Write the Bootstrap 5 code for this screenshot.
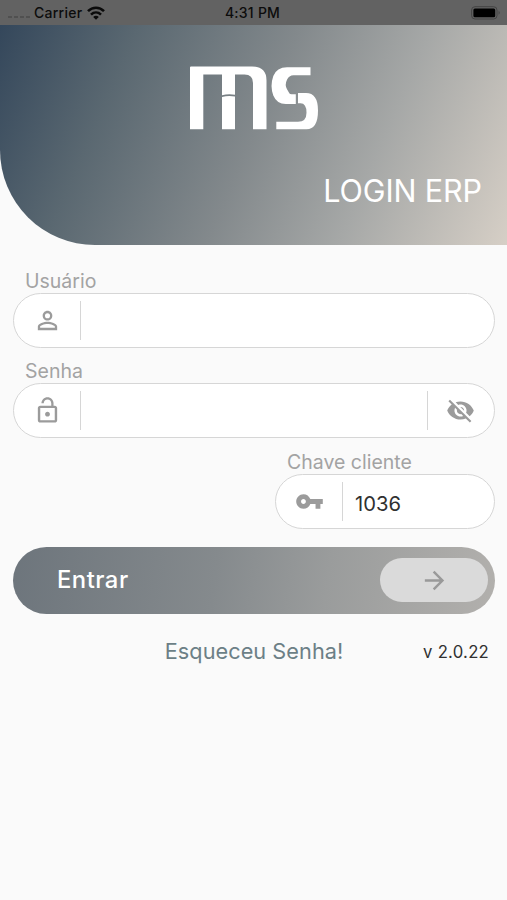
<!DOCTYPE html>
<html lang="pt-BR">
<head>
<meta charset="utf-8">
<meta name="viewport" content="width=device-width, initial-scale=1">
<title>Login ERP</title>
<link rel="stylesheet" href="https://cdn.jsdelivr.net/npm/bootstrap@5.3.0/dist/css/bootstrap.min.css">
<style>
body{font-family:Inter,"Liberation Sans",sans-serif;background:#fafafa;color:#303030;line-height:1}
svg{display:block;flex:none}
.screen{height:900px}
.status-bar{height:25px;background:#626262;color:#0c0c0c;font-size:14px;letter-spacing:.25px;font-weight:500;padding:1px 6px 0 8px}
.status-bar>div{flex:1 1 0}
.signal{width:22px;height:2px;margin-top:8px;margin-right:4px;background:repeating-linear-gradient(90deg,#505050 0 4px,transparent 4px 6px)}
.wifi{margin-left:5px}
.hero{height:220px;background:linear-gradient(113.5deg,#34475b 0,#5a6871 23%,#83898c 50%,#a6a8a7 72%,#d6cfc6 100%);border-bottom-left-radius:95px;padding:40px 25px 0 0}
.hero h1{font-size:30.5px;font-weight:400;color:#fff;margin-top:42px;letter-spacing:-.1px}
.hero svg{margin-left:189px}
.login-form{padding:25px 12px 0 13px}
.caption{font-size:19.5px;line-height:22px;color:#a3a3a3;padding-left:12px;margin-bottom:1px}
.pill{height:55px;border:1.5px solid #d6d6d6;border-radius:28px;background:#fff;color:#9b9b9b}
.pill .glyph{flex:none;width:67px;height:39px;display:flex;align-items:center;justify-content:center}
.pill .lead-glyph{border-right:1.5px solid #d6d6d6}
.pill .trail-glyph{border-left:1.5px solid #d6d6d6;padding-right:1px}
.pill input{min-width:0;border:0;outline:0;background:none;color:#303030;font-size:20.2px;padding:5px 12px 0;width:0}
.field{margin-bottom:12.4px}
.client-key{width:220px}
.enter-btn{height:67px;border:0;border-radius:34px;background:linear-gradient(98deg,#6d757c 0,#858a8d 42%,#9a9c9c 65%,#b2b0ad 100%);color:#fff;font-size:23.8px;letter-spacing:.5px;font-weight:500;padding:0 7px 0 44px;margin-top:18px}
.knob{width:108px;height:44px;border-radius:22px;background:#dadada;color:#999}
.footer-row{display:grid;grid-template-columns:1fr auto 1fr;margin-top:26px}
.forgot{grid-column:2;font-size:21.7px;letter-spacing:.05px;color:#6c7f86;padding-top:1px}
.version{font-size:16.7px;letter-spacing:.25px;padding-right:6px;padding-top:3px}
</style>
</head>
<body>
<main class="screen d-flex flex-column overflow-hidden">
  <div class="status-bar d-flex align-items-center">
    <div class="d-flex align-items-center">
      <span class="signal"></span><span>Carrier</span>
      <svg class="wifi" width="18" height="14" viewBox="0 0 18 14" fill="none" stroke="#0a0a0a" stroke-width="2.6"><path d="M1 5.2C5.500.6 12.500.6 17 5.200"/><path d="M4 8.600c2.900-2.800 7.100-2.800 10 0"/><path d="M9 13.700 6.200 10.900c1.600-1.400 4-1.400 5.600 0z" fill="#0a0a0a" stroke="none"/></svg>
    </div>
    <span class="me-1">4:31 PM</span>
    <div class="d-flex justify-content-end">
      <svg width="30" height="14" viewBox="0 0 30 14"><rect x=".6" y=".7" width="25.4" height="12.3" rx="3.4" fill="none" stroke="#444"/><rect x="2.4" y="2.4" width="21.8" height="8.9" rx="1.5"/><path d="M27.6 4.8q2.200 2 0 4z" fill="#444"/></svg>
    </div>
  </div>
  <header class="hero">
    <svg width="130" height="66" viewBox="0 0 130 66" fill="#fff"><path d="M2 1.500h61q14.500 0 14.500 14v48.700H64V18q0-8.500-8.500-8.500H46v20.300q-6.500-1.200-13 .4V9.500H14.300v54.700H1V2.500q0-1 1-1z"/><path d="M33 32q6.500-1.700 13-.4v32.600H33z"/><path d="M98 2.200h23.500v8.100H104.500q-4.500 0-6.500 4.500-2.500 5 0 9.500l2.500 4.200q.5.800 2 .8h4.300v9.600h-10q-9 0-12.500-8.500-3.500-9.500 0-19.500 3.500-8.700 13.700-8.700z"/><path d="M109 28h8q12 0 12 17.500 0 18.700-11.500 18.700H87.300v-7.500h21.700q8.500 0 8.500-9 0-9.500-6-9.500H109z"/></svg>
    <h1 class="text-end mb-0">LOGIN ERP</h1>
  </header>
  <form class="login-form">
    <div class="field">
      <label class="caption d-block" for="user">Usuário</label>
      <div class="pill d-flex align-items-center">
        <span class="glyph lead-glyph"><svg width="29" height="29" viewBox="0 0 24 24" fill="currentColor"><path d="M12 5.900a2.100 2.100 0 1 1 0 4.200 2.100 2.100 0 0 1 0-4.200m0 9c2.970 0 6.100 1.460 6.100 2.100v1.100H5.900V17c0-.64 3.130-2.100 6.100-2.100M12 4C9.790 4 8 5.790 8 8s1.790 4 4 4 4-1.790 4-4-1.790-4-4-4zm0 9c-2.670 0-8 1.340-8 4v3h16v-3c0-2.660-5.330-4-8-4z"/></svg></span>
        <input class="flex-grow-1" id="user" type="text">
      </div>
    </div>
    <div class="field">
      <label class="caption d-block" for="pass">Senha</label>
      <div class="pill d-flex align-items-center">
        <span class="glyph lead-glyph"><svg width="29" height="29" viewBox="0 0 24 24" fill="currentColor"><path d="M12 17c1.100 0 2-.9 2-2s-.9-2-2-2-2 .9-2 2 .9 2 2 2zm6-9h-1V6c0-2.760-2.240-5-5-5S7 3.240 7 6h1.900c0-1.710 1.390-3.100 3.100-3.100s3.100 1.390 3.100 3.100v2H6c-1.100 0-2 .9-2 2v10c0 1.100.9 2 2 2h12c1.100 0 2-.9 2-2V10c0-1.100-.9-2-2-2zm0 12H6V10h12v10z"/></svg></span>
        <input class="flex-grow-1" id="pass" type="password">
        <span class="glyph trail-glyph"><svg width="29" height="29" viewBox="0 0 24 24" fill="currentColor"><path d="M12 7c2.760 0 5 2.240 5 5 0 .65-.13 1.260-.36 1.830l2.920 2.920c1.510-1.260 2.700-2.890 3.430-4.750-1.730-4.390-6-7.500-11-7.500-1.400 0-2.740.25-3.980.7l2.160 2.160C10.740 7.130 11.350 7 12 7zM2 4.270l2.280 2.280.46.46C3.080 8.300 1.780 10.020 1 12c1.730 4.390 6 7.500 11 7.500 1.550 0 3.030-.3 4.380-.84l.42.42L19.730 22 21 20.730 3.270 3 2 4.270zM7.530 9.800l1.550 1.550c-.05.21-.08.43-.08.65 0 1.660 1.340 3 3 3 .22 0 .44-.03.65-.08l1.550 1.550c-.67.33-1.410.53-2.200.53-2.760 0-5-2.240-5-5 0-.79.2-1.530.53-2.200zm4.310-.78l3.150 3.150.02-.16c0-1.660-1.340-3-3-3l-.17.01z"/></svg></span>
      </div>
    </div>
    <div class="client-key ms-auto">
      <label class="caption d-block" for="key">Chave cliente</label>
      <div class="pill d-flex align-items-center">
        <span class="glyph lead-glyph"><svg width="29" height="29" viewBox="0 0 24 24" fill="currentColor"><path d="M12.650 10C11.830 7.670 9.610 6 7 6c-3.310 0-6 2.690-6 6s2.690 6 6 6c2.610 0 4.830-1.670 5.650-4H17v4h4v-4h2v-4H12.650zM7 14c-1.100 0-2-.9-2-2s.9-2 2-2 2 .9 2 2-.9 2-2 2z"/></svg></span>
        <input class="flex-grow-1" id="key" type="text" value="1036">
      </div>
    </div>
    <button class="enter-btn w-100 d-flex align-items-center justify-content-between" type="button">
      <span>Entrar</span>
      <span class="knob d-flex align-items-center justify-content-center"><svg width="29" height="29" viewBox="0 0 24 24" fill="currentColor"><path d="M12 4l-1.410 1.410L16.170 11H4v2h12.170l-5.580 5.590L12 20l8-8z"/></svg></span>
    </button>
    <div class="footer-row align-items-center">
      <a class="forgot text-decoration-none" href="#">Esqueceu Senha!</a>
      <span class="version text-end">v 2.0.22</span>
    </div>
  </form>
</main>
<script src="https://cdn.jsdelivr.net/npm/bootstrap@5.3.0/dist/js/bootstrap.bundle.min.js"></script>
</body>
</html>
